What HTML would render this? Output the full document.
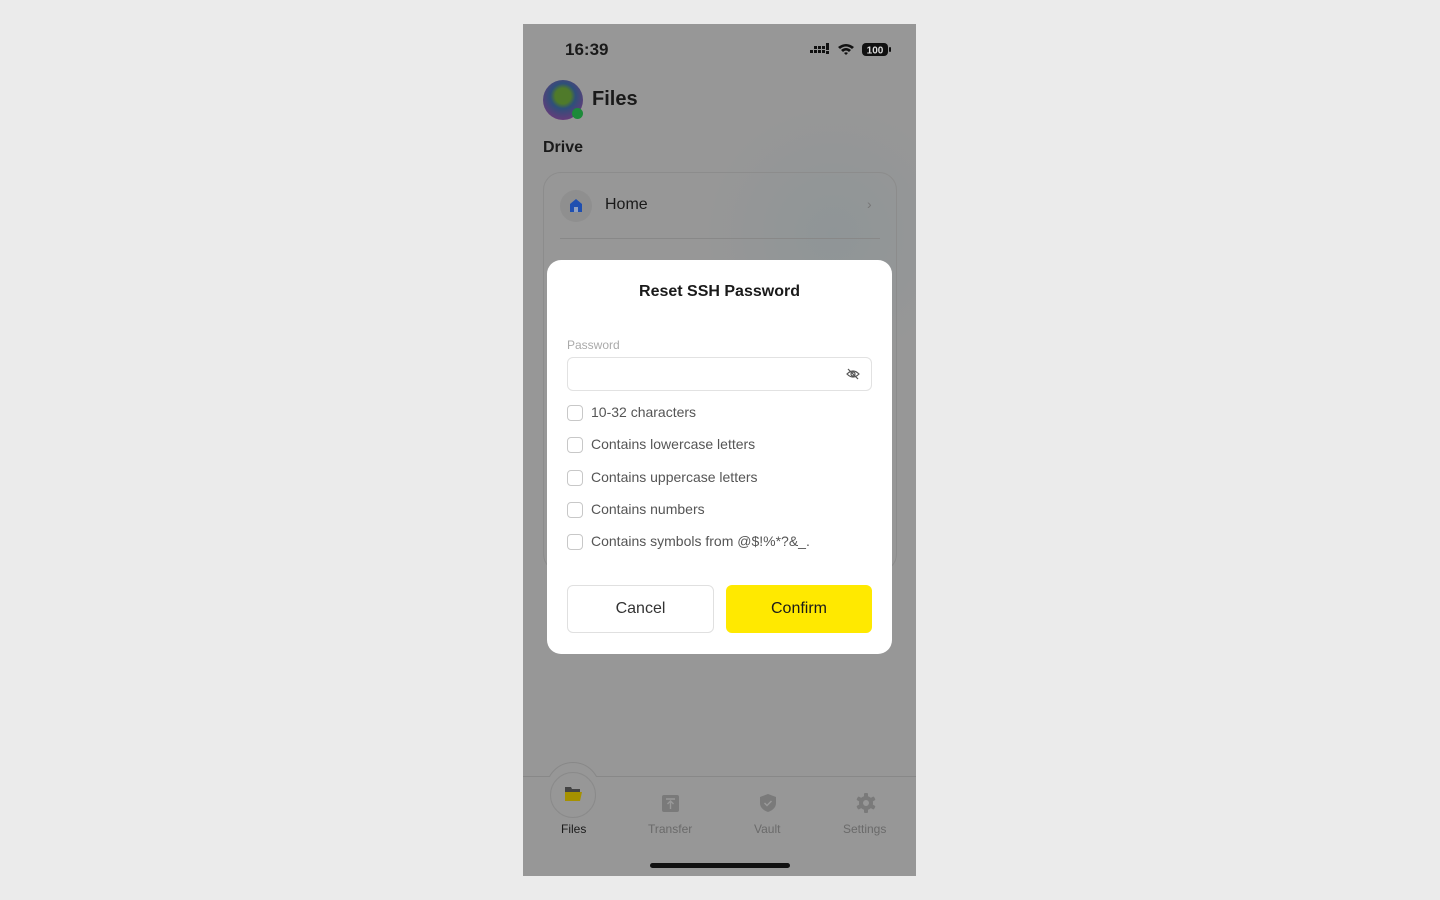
<!DOCTYPE html>
<html><head><meta charset="utf-8"><style>
*{box-sizing:border-box;margin:0;padding:0}
body{width:1440px;height:900px;background:#ebebeb;font-family:"Liberation Sans",Arial,sans-serif;position:relative;overflow:hidden}
.phone{position:absolute;left:523px;top:24px;width:393px;height:852px;background:#979797;overflow:hidden}
.glow{position:absolute;left:180px;top:80px;width:260px;height:260px;border-radius:50%;background:radial-gradient(circle,#8f9597 0%,rgba(151,151,151,0) 70%)}
.abs{position:absolute}
.dlg{position:absolute;left:24px;top:236px;width:345px;height:394px;background:#fff;border-radius:14px}
.cb{position:absolute;left:20px;width:16px;height:16px;border:1.3px solid #c8c8c8;border-radius:4px}
.cl{position:absolute;left:44px;font-size:14px;color:#555}
</style></head><body>
<div class="phone">
 <div class="glow"></div>
 <div class="abs" style="left:42px;top:16px;font-size:17px;font-weight:bold;color:#1a1a1a">16:39</div>
 <svg class="abs" style="left:287px;top:19px" width="82" height="14">
  <g fill="#111"><rect x="0" y="7" width="3" height="3"/><rect x="4" y="7" width="3" height="3"/><rect x="8" y="7" width="3" height="3"/><rect x="12" y="7" width="3" height="3"/><rect x="4" y="3" width="3" height="3"/><rect x="8" y="3" width="3" height="3"/><rect x="12" y="3" width="3" height="3"/><rect x="16" y="0" width="3" height="7"/><rect x="16" y="8" width="3" height="3"/>
  <path d="M28 4 Q36 -2 44 4 L42 6 Q36 1 30 6Z M31 7 Q36 3 41 7 L39 9 Q36 6 33 9Z M34 10 L36 12 L38 10 Q36 8.5 34 10Z"/>
  <rect x="52" y="0" width="26" height="13" rx="4"/><rect x="79" y="4" width="2" height="5" rx="1"/></g>
  <text x="65" y="10.5" font-size="10" fill="#ddd" text-anchor="middle" font-family="Liberation Sans" font-weight="bold">100</text>
 </svg>
 <div class="abs" style="left:20px;top:56px;width:40px;height:40px;border-radius:50%;background:radial-gradient(circle at 50% 40%,#4f7a2a 0 25%,#2e4f7a 40%,#6a3a7a 80%)"></div>
 <div class="abs" style="left:49px;top:84px;width:11px;height:11px;border-radius:50%;background:#1d8a3a"></div>
 <div class="abs" style="left:69px;top:64px;font-size:20px;font-weight:bold;color:#1a1a1a">Files</div>
 <div class="abs" style="left:20px;top:115px;font-size:16px;font-weight:bold;color:#1a1a1a">Drive</div>
 <div class="abs" style="left:20px;top:148px;width:354px;height:400px;border:1px solid #8c8c8c;border-radius:18px"></div>
 <div class="abs" style="left:37px;top:166px;width:32px;height:32px;border-radius:50%;background:#8f8f8f"></div>
 <svg class="abs" style="left:47px;top:175px" width="12" height="13"><path d="M6 0 L12 5 V13 H0 V5Z" fill="#1f4fb0"/><rect x="4" y="8" width="4" height="5" fill="#8fa0c0"/></svg>
 <div class="abs" style="left:82px;top:172px;font-size:16px;color:#1a1a1a">Home</div>
 <div class="abs" style="left:344px;top:172px;font-size:14px;color:#777">›</div>
 <div class="abs" style="left:37px;top:214px;width:320px;height:1px;background:#888"></div>
 <div class="dlg">
  <div class="abs" style="left:0;width:345px;top:23px;text-align:center;font-size:16px;font-weight:bold;color:#1a1a1a">Reset SSH Password</div>
  <div class="abs" style="left:20px;top:78px;font-size:12px;color:#aaa">Password</div>
  <div class="abs" style="left:20px;top:97px;width:305px;height:34px;border:1px solid #e2e2e2;border-radius:6px"></div>
  <svg class="abs" style="left:299px;top:107px" width="14" height="14" fill="none" stroke="#555" stroke-width="1.2"><path d="M1 7 Q7 1 13 7 Q7 13 1 7Z"/><circle cx="7" cy="7" r="2"/><path d="M2 2 L12 12"/></svg>
  <div class="cb" style="top:145px"></div><div class="cl" style="top:144px">10-32 characters</div>
  <div class="cb" style="top:177px"></div><div class="cl" style="top:176px">Contains lowercase letters</div>
  <div class="cb" style="top:210px"></div><div class="cl" style="top:209px">Contains uppercase letters</div>
  <div class="cb" style="top:242px"></div><div class="cl" style="top:241px">Contains numbers</div>
  <div class="cb" style="top:274px"></div><div class="cl" style="top:273px">Contains symbols from @$!%*?&amp;_.</div>
  <div class="abs" style="left:20px;top:325px;width:147px;height:48px;border:1px solid #e0e0e0;border-radius:6px;text-align:center;line-height:46px;font-size:16px;color:#333">Cancel</div>
  <div class="abs" style="left:179px;top:325px;width:146px;height:48px;background:#ffe900;border-radius:6px;text-align:center;line-height:48px;font-size:16px;color:#1a1a1a">Confirm</div>
 </div>
 <div class="abs" style="left:0;top:752px;width:393px;height:1px;background:#888"></div>
 <div class="abs" style="left:23px;top:738px;width:54px;height:54px;border-radius:50%;border:1px solid #888;background:#979797"></div>
 <div class="abs" style="left:20px;top:753px;width:60px;height:50px;background:#979797"></div>
 <div class="abs" style="left:27px;top:748px;width:46px;height:46px;border-radius:50%;border:1px solid #8a8a8a"></div>
 <svg class="abs" style="left:42px;top:763px" width="17" height="15"><path d="M0 0 H6 L7 2 H15 V13 H0Z" fill="#444"/><path d="M0 5 H17 L15 14 H0Z" fill="#a69100"/></svg>
 <svg class="abs" style="left:139px;top:771px" width="17" height="17"><rect width="17" height="17" rx="2" fill="#7a7a7a"/><path d="M4 4 H13 M8.5 14 V6 M5.5 9 L8.5 6 L11.5 9" stroke="#999" stroke-width="1.4" fill="none"/></svg>
 <svg class="abs" style="left:237px;top:770px" width="16" height="18"><path d="M8 0 L16 3 V9 Q16 15 8 18 Q0 15 0 9 V3Z" fill="#7a7a7a"/><path d="M4.5 9 L7 11.5 L11.5 7" stroke="#999" stroke-width="1.5" fill="none"/></svg>
 <svg class="abs" style="left:333px;top:769px" width="20" height="20"><g fill="#7a7a7a"><circle cx="10" cy="10" r="7"/><rect x="8" y="0" width="4" height="20" rx="1"/><rect x="8" y="0" width="4" height="20" rx="1" transform="rotate(60 10 10)"/><rect x="8" y="0" width="4" height="20" rx="1" transform="rotate(120 10 10)"/></g><circle cx="10" cy="10" r="3" fill="#979797"/></svg>
 <div class="abs" style="left:38px;top:798px;font-size:12px;color:#1a1a1a">Files</div>
 <div class="abs" style="left:125px;top:798px;font-size:12px;color:#6a6a6a">Transfer</div>
 <div class="abs" style="left:231px;top:798px;font-size:12px;color:#6a6a6a">Vault</div>
 <div class="abs" style="left:320px;top:798px;font-size:12px;color:#6a6a6a">Settings</div>
 <div class="abs" style="left:127px;top:839px;width:140px;height:5px;border-radius:3px;background:#111"></div>
</div>
</body></html>
